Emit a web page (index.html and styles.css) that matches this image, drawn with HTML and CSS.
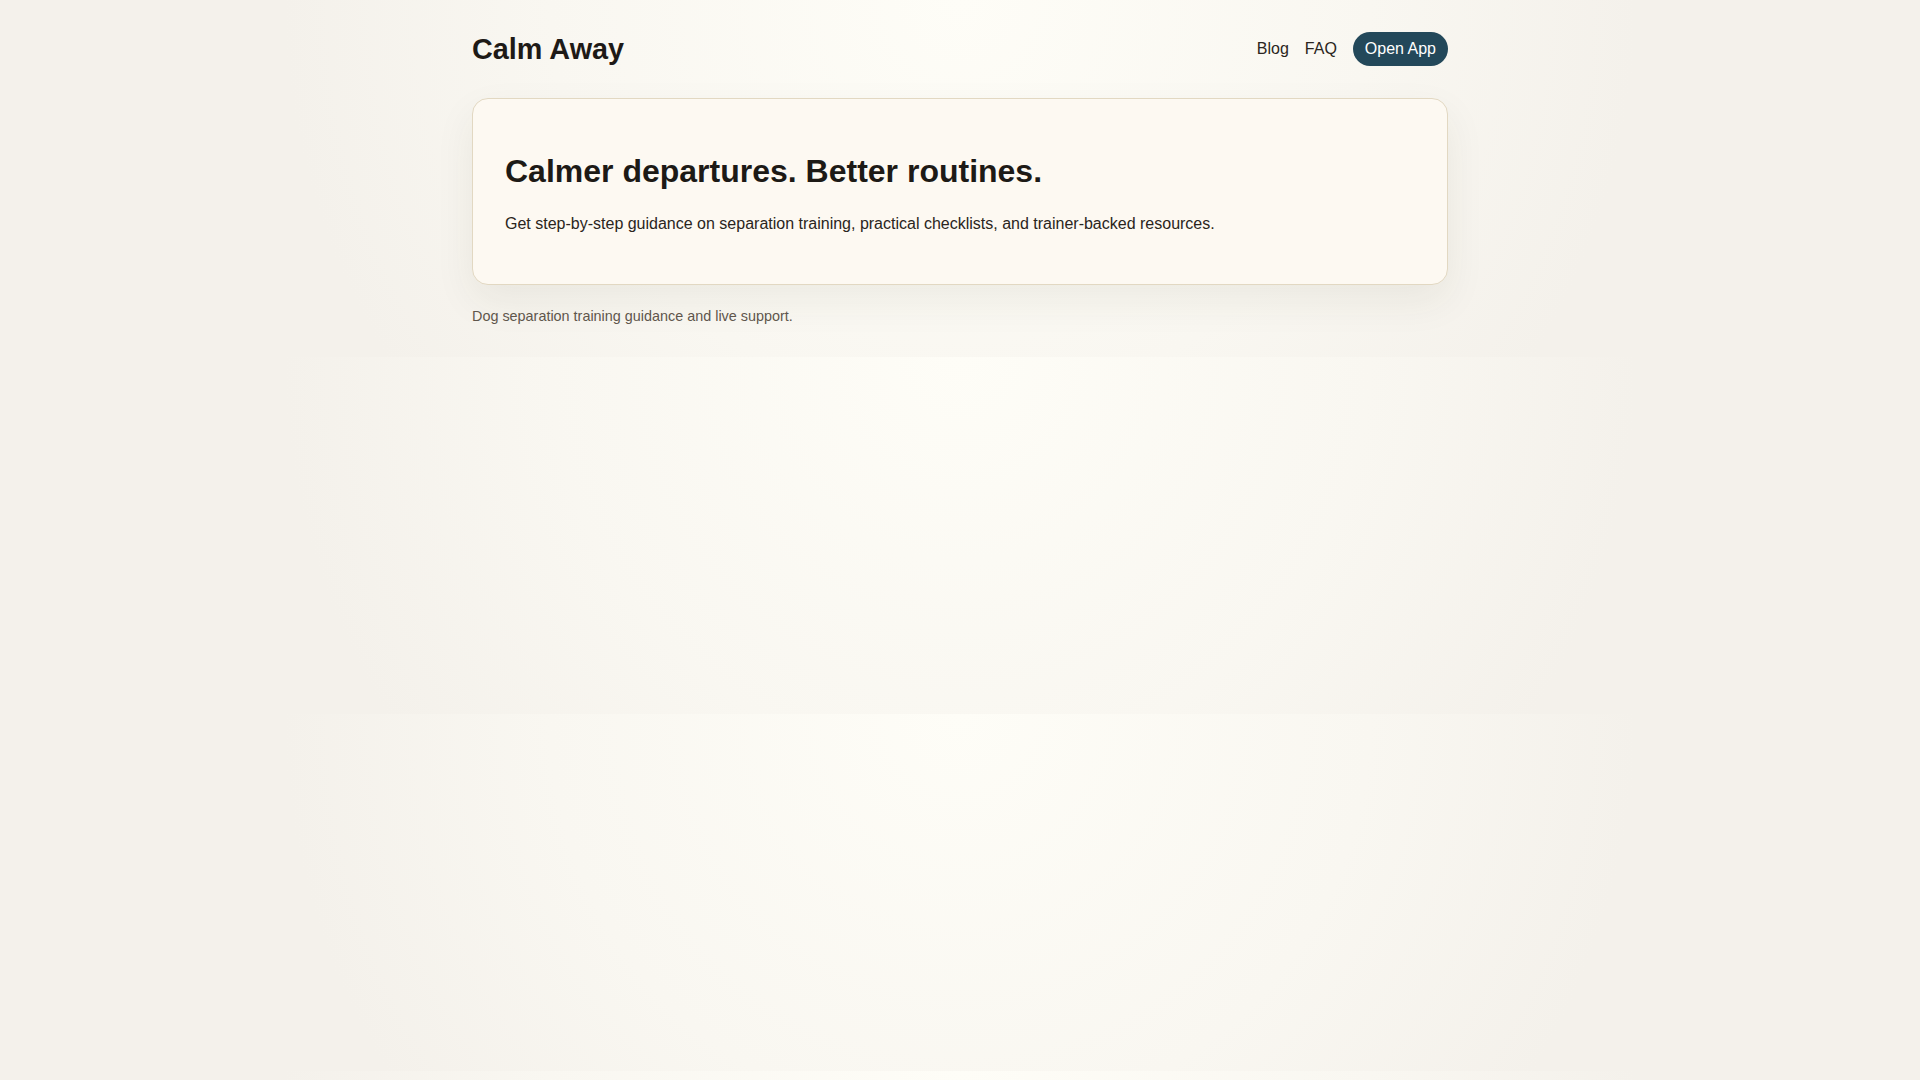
FILE: index.html
```html
<!DOCTYPE html>
<html lang="en">
<head>
  <meta charset="UTF-8" />
  <title>Calm Away</title>
  <meta name="viewport" content="width=device-width, initial-scale=1.0" />
  <link rel="stylesheet" href="styles.css">
</head>
<body>

  <div class="wrap">
    <!-- Top bar -->
    <header class="topbar">
      <a class="brand" href="#">Calm Away</a>
      <nav class="nav">
        <a href="#">Blog</a>
        <a href="#">FAQ</a>
        <a class="nav-cta" href="#">Open App</a>
      </nav>
    </header>

    <!-- Hero -->
    <main>
      <section class="hero">
        <h1>Calmer departures. Better routines.</h1>
        <p>Get step-by-step guidance on separation training, practical checklists, and trainer-backed resources.</p>
      </section>
    </main>

    <footer class="site-footer">
      Dog separation training guidance and live support.
    </footer>
  </div>

</body>
</html>
```

FILE: styles.css
```css
body {
  margin: 0;
  font-family: "Liberation Sans", Arial, sans-serif;
  line-height: 1.6;
  color: #231f1b;
  background: radial-gradient(circle at top, #fefdf7 0%, #f9f7f1 40%, #f4f1eb 66%);
}

a {
  color: inherit;
  text-decoration: none;
}

.wrap {
  max-width: 976px;
  margin: 0 auto;
}

.topbar {
  display: flex;
  justify-content: space-between;
  align-items: center;
  padding: 28px 0;
}

.brand {
  font-size: 28.8px;
  font-weight: 700;
  line-height: 42px;
  color: #1e1a17;
}

.nav {
  display: flex;
  align-items: center;
  gap: 16px;
  font-size: 16px;
  color: #2a2520;
}

.nav-cta {
  background: #23485a;
  color: #fff;
  padding: 6px 12px;
  line-height: 22px;
  border-radius: 999px;
}

.hero {
  background: #fdf9f2;
  border: 1px solid #e2d8c2;
  border-radius: 16px;
  padding: 32px;
  box-shadow: 0 16px 40px rgba(60, 50, 30, 0.07);
}

.hero h1 {
  font-size: 32px;
  line-height: 1.2;
  margin: 21px 0;
  color: #1d1a16;
}

.hero p {
  font-size: 16px;
  margin: 0 0 15px;
  color: #2a2520;
}

.site-footer {
  font-size: 14.4px;
  line-height: 23px;
  color: #5f564c;
  padding: 20px 0 29px;
}
```
